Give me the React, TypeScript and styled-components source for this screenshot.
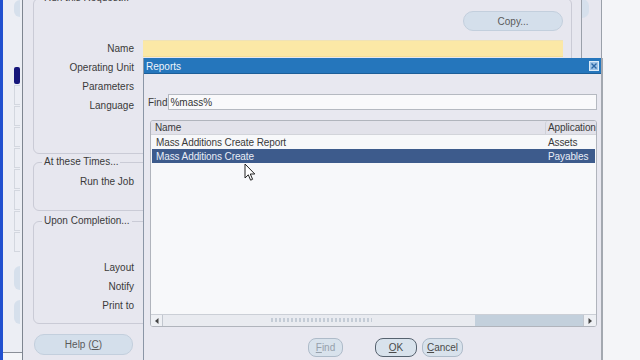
import React from 'react';
import styled, { createGlobalStyle } from 'styled-components';

const GlobalStyle = createGlobalStyle`
  html, body { margin: 0; padding: 0; }
  body {
    width: 640px;
    height: 360px;
    overflow: hidden;
    background: #f4f5f8;
    font-family: "Liberation Sans", Arial, sans-serif;
    font-size: 10px;
    color: #3a3a3a;
  }
`;

const Screen = styled.div`
  position: relative;
  width: 640px;
  height: 360px;
  overflow: hidden;
  display: flex;
  background: #f4f5f8;
`;

// left edge: desktop blue + the tab rail of the navigator
const LeftStrip = styled.div`
  width: 22px;
  height: 360px;
  display: flex;
  flex-shrink: 0;
`;

const BlueEdge = styled.div`
  width: 3px;
  background: #2150cf;
`;

const TabRail = styled.div`
  flex: 1;
  background: #eceef4;
  display: flex;
  flex-direction: column;
  padding-left: 11px;
  border-bottom: 1px solid #8a8f98;
  height: 352px;
`;

const Knob = styled.div<{ $top: number; $h: number }>`
  width: 6px;
  height: ${(p) => p.$h}px;
  margin-top: ${(p) => p.$top}px;
  background: #d6e0ec;
  border-radius: 6px 0 0 6px;
`;

const ActiveTab = styled.div`
  width: 6px;
  height: 17px;
  margin-top: 50px;
  background: #16167a;
  border-radius: 2px;
`;

const TabSegment = styled.div`
  width: 6px;
  height: 20px;
  margin-top: 1px;
  box-sizing: border-box;
  border: 1px solid #d3d7df;
  border-right: none;
`;

const MainWindow = styled.div`
  width: 580px;
  height: 360px;
  flex-shrink: 0;
  display: flex;
  background: #e7e7ef;
  border-left: 1px solid #7e8590;
  border-right: 1px solid #9aa0aa;
  box-sizing: border-box;
`;

const FormArea = styled.div`
  width: 559px;
  flex-shrink: 0;
  box-sizing: border-box;
  border-right: 1px solid #9aa0aa;
  padding-left: 10px;
  margin-top: -8px;
  display: flex;
  flex-direction: column;
`;

const RightRail = styled.div`
  flex: 1;
  display: flex;
  flex-direction: column;
`;

const RailKnob = styled.div`
  width: 7px;
  height: 19px;
  margin-top: -1px;
  background: #d6e0ec;
  border-radius: 0 7px 7px 0;
`;

const Group = styled.fieldset<{ $h: number; $gap?: number }>`
  margin: ${(p) => p.$gap ?? 0}px 0 0 0;
  padding: 0;
  width: 539px;
  height: ${(p) => p.$h}px;
  box-sizing: border-box;
  border: 1px solid #cacbd6;
  border-radius: 6px;
  min-inline-size: 0;
`;

const GroupTitle = styled.legend`
  margin-left: 8px;
  padding: 0 2px;
  line-height: 12px;
  font-size: 10px;
  color: #3a3a3a;
`;

const CopyRow = styled.div`
  display: flex;
  justify-content: flex-end;
  width: 529px;
  margin-top: 7px;
`;

const PillButton = styled.div<{ $w: number; $h: number }>`
  width: ${(p) => p.$w}px;
  height: ${(p) => p.$h}px;
  box-sizing: border-box;
  border: 1px solid #c3cfdd;
  border-radius: 10px;
  background: #d4dfeb;
  color: #5a5a5a;
  display: flex;
  align-items: center;
  justify-content: center;
  font-size: 10px;
`;

const FieldRow = styled.div<{ $first?: number }>`
  display: grid;
  grid-template-columns: 100px 420px;
  column-gap: 9px;
  height: 19px;
  align-items: center;
  margin-top: ${(p) => p.$first ?? 0}px;
`;

const Label = styled.span`
  text-align: right;
  color: #3a3a3a;
`;

const RequiredField = styled.div`
  height: 17px;
  margin-top: -1px;
  box-sizing: border-box;
  background: #fbe8a6;
  border-top: 1px solid #efe2b6;
  border-bottom: 1px solid #f3dd95;
`;

const HelpButton = styled(PillButton)`
  margin: 10px 0 0 1px;
`;

// Reports list-of-values window
const Dialog = styled.div`
  position: absolute;
  left: 143px;
  top: 58px;
  width: 460px;
  height: 310px;
  box-sizing: border-box;
  background: #e8e8f0;
  border-left: 1px solid #8b96a6;
  border-right: 2px solid #a3a8b0;
  display: flex;
  flex-direction: column;
`;

const TitleBar = styled.div`
  height: 16px;
  box-sizing: border-box;
  background: #2576bc;
  border-bottom: 1px solid #1c5e98;
  color: #eef4fb;
  display: flex;
  align-items: center;
  justify-content: space-between;
  padding: 1px 2px 0 2px;
`;

const CloseBox = styled.div`
  width: 10px;
  height: 10px;
  box-sizing: border-box;
  background: #9fc3e6;
  border: 1px solid #dcebf8;
  display: flex;
  align-items: center;
  justify-content: center;
`;

const DialogBody = styled.div`
  flex: 1;
  display: flex;
  flex-direction: column;
  padding: 0 4px 0 4px;
`;

const FindRow = styled.div`
  display: flex;
  align-items: center;
  gap: 1px;
  margin-top: 20px;
`;

const FindInput = styled.div`
  flex: 1;
  height: 16px;
  box-sizing: border-box;
  background: #f9f9fb;
  border: 1px solid #b5b9c1;
  padding-left: 1px;
  display: flex;
  align-items: center;
  color: #333;
`;

const List = styled.div`
  margin: 10px 0 0 2px;
  height: 207px;
  box-sizing: border-box;
  border: 1px solid #b0b4bc;
  border-radius: 3px;
  background: #f7f8fa;
  display: flex;
  flex-direction: column;
  overflow: hidden;
`;

const ListGrid = styled.div<{ $selected?: boolean }>`
  display: grid;
  grid-template-columns: 394px 1fr;
  height: 14px;
  align-items: center;
  margin: 0 1px;
  background: ${(p) => (p.$selected ? '#3d5b8c' : 'transparent')};
  color: ${(p) => (p.$selected ? '#e9eef7' : '#3a3a3a')};
  letter-spacing: -0.1px;
`;

const HeaderGrid = styled(ListGrid)`
  height: 13px;
  margin: 0;
  background: #e2e2ea;
  border-bottom: 1px solid #d2d4da;
`;

const Cell = styled.span<{ $app?: boolean }>`
  padding-left: ${(p) => (p.$app ? 2 : 4)}px;
  white-space: nowrap;
  overflow: hidden;
`;

const HeaderCell = styled(Cell)`
  height: 13px;
  line-height: 13px;
  border-left: ${(p) => (p.$app ? '1px solid #cfd1d8' : 'none')};
  border-radius: ${(p) => (p.$app ? '3px 0 0 0' : '0')};
`;

const ListSpacer = styled.div`
  flex: 1;
`;

const HScroll = styled.div`
  height: 12px;
  box-sizing: border-box;
  border-top: 1px solid #cbcfd6;
  background: #e9ebf0;
  display: flex;
  align-items: stretch;
`;

const ScrollArrow = styled.div<{ $w: number }>`
  width: ${(p) => p.$w}px;
  display: flex;
  align-items: center;
  justify-content: center;
  border-right: 1px solid #c2c7cf;
  background: #eef0f4;
  &:last-child {
    border-right: none;
    border-left: 1px solid #c2c7cf;
  }
`;

const TrackGap = styled.div<{ $w?: number }>`
  width: ${(p) => (p.$w ? `${p.$w}px` : 'auto')};
  flex: ${(p) => (p.$w ? 'none' : 1)};
`;

const Grip = styled.div`
  width: 102px;
  margin-top: 3px;
  height: 4px;
  background-image: radial-gradient(circle, #c4ccd6 0.8px, transparent 1px);
  background-size: 4px 2px;
`;

const Thumb = styled.div`
  width: 108px;
  background: #c3d0dc;
`;

const ButtonRow = styled.div`
  display: flex;
  margin-top: 11px;
  padding-left: 160px;
`;

const DlgButton = styled.div<{ $w: number; $gap?: number; $disabled?: boolean; $focused?: boolean }>`
  width: ${(p) => p.$w}px;
  height: 19px;
  margin-left: ${(p) => p.$gap ?? 0}px;
  box-sizing: border-box;
  border: 1px solid ${(p) => (p.$focused ? '#56626f' : '#aebbc9')};
  border-radius: 8px;
  background: #d8e2ec;
  color: ${(p) => (p.$disabled ? '#96a0ab' : '#4a4a4a')};
  display: flex;
  align-items: center;
  justify-content: center;
  font-size: 10px;
`;

const Cursor = styled.svg`
  position: absolute;
  left: 244px;
  top: 163px;
`;

const segments = Array.from({ length: 8 });

const App = () => {
  return (
    <Screen>
      <GlobalStyle />
      <LeftStrip>
        <BlueEdge />
        <TabRail>
          <Knob $top={0} $h={17} />
          <ActiveTab />
          {segments.map((_, i) => (
            <TabSegment key={i} />
          ))}
          <Knob $top={14} $h={24} />
          <Knob $top={10} $h={24} />
        </TabRail>
      </LeftStrip>

      <MainWindow>
        <FormArea>
          <Group $h={162}>
            <GroupTitle>Run this Request...</GroupTitle>
            <CopyRow>
              <PillButton $w={100} $h={20}>Copy...</PillButton>
            </CopyRow>
            <FieldRow $first={8}>
              <Label>Name</Label>
              <RequiredField />
            </FieldRow>
            <FieldRow>
              <Label>Operating Unit</Label>
            </FieldRow>
            <FieldRow>
              <Label>Parameters</Label>
            </FieldRow>
            <FieldRow>
              <Label>Language</Label>
            </FieldRow>
          </Group>

          <Group $h={55} $gap={2}>
            <GroupTitle>At these Times...</GroupTitle>
            <FieldRow $first={4}>
              <Label>Run the Job</Label>
            </FieldRow>
          </Group>

          <Group $h={109} $gap={4}>
            <GroupTitle>Upon Completion...</GroupTitle>
            <FieldRow $first={31}>
              <Label>Layout</Label>
            </FieldRow>
            <FieldRow>
              <Label>Notify</Label>
            </FieldRow>
            <FieldRow>
              <Label>Print to</Label>
            </FieldRow>
          </Group>

          <HelpButton $w={99} $h={21}>
            Help (<u>C</u>)
          </HelpButton>
        </FormArea>
        <RightRail>
          <RailKnob />
        </RightRail>
      </MainWindow>

      <Dialog>
        <TitleBar>
          <span>Reports</span>
          <CloseBox>
            <svg width="6" height="6" viewBox="0 0 6 6">
              <path d="M0.5 0.5 L5.5 5.5 M5.5 0.5 L0.5 5.5" stroke="#2a67a6" strokeWidth="1.4" />
            </svg>
          </CloseBox>
        </TitleBar>
        <DialogBody>
          <FindRow>
            <span>Find</span>
            <FindInput>%mass%</FindInput>
          </FindRow>
          <List>
            <HeaderGrid>
              <HeaderCell>Name</HeaderCell>
              <HeaderCell $app>Application</HeaderCell>
            </HeaderGrid>
            <ListGrid>
              <Cell>Mass Additions Create Report</Cell>
              <Cell $app>Assets</Cell>
            </ListGrid>
            <ListGrid $selected>
              <Cell>Mass Additions Create</Cell>
              <Cell $app>Payables</Cell>
            </ListGrid>
            <ListSpacer />
            <HScroll>
              <ScrollArrow $w={11}>
                <svg width="4" height="6" viewBox="0 0 4 6">
                  <path d="M3.5 0 L0 3 L3.5 6 Z" fill="#444" />
                </svg>
              </ScrollArrow>
              <TrackGap $w={107} />
              <Grip />
              <TrackGap />
              <Thumb />
              <ScrollArrow $w={12}>
                <svg width="4" height="6" viewBox="0 0 4 6">
                  <path d="M0.5 0 L4 3 L0.5 6 Z" fill="#444" />
                </svg>
              </ScrollArrow>
            </HScroll>
          </List>
          <ButtonRow>
            <DlgButton $w={35} $disabled>
              <span><u>F</u>ind</span>
            </DlgButton>
            <DlgButton $w={42} $gap={32} $focused>
              <span><u>O</u>K</span>
            </DlgButton>
            <DlgButton $w={41} $gap={5}>
              <span><u>C</u>ancel</span>
            </DlgButton>
          </ButtonRow>
        </DialogBody>
      </Dialog>

      <Cursor width="12" height="19" viewBox="0 0 12 19">
        <path
          d="M1 1 L1 15 L4.3 11.8 L6.6 17.2 L8.6 16.3 L6.3 11 L10.8 11 Z"
          fill="#ffffff"
          stroke="#222"
          strokeWidth="1"
          strokeLinejoin="round"
        />
      </Cursor>
    </Screen>
  );
};

export default App;
